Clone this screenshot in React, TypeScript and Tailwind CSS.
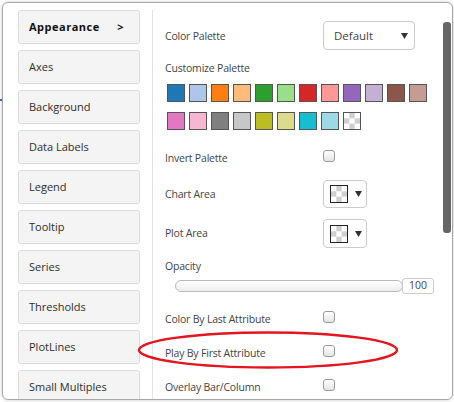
import React from 'react';

const NAV = [
  'Appearance',
  'Axes',
  'Background',
  'Data Labels',
  'Legend',
  'Tooltip',
  'Series',
  'Thresholds',
  'PlotLines',
  'Small Multiples',
];

const ROW1 = [
  '#1f77b4', '#aec7e8', '#ff7f0e', '#ffbb78', '#2ca02c', '#98df8a',
  '#d62728', '#ff9896', '#9467bd', '#c5b0d5', '#8c564b', '#c49c94',
];
const ROW2 = ['#e377c2', '#f7b6d2', '#7f7f7f', '#c7c7c7', '#bcbd22', '#dbdb8d', '#17becf', '#9edae5'];

function Checker({ size = 16 }: { size?: number }) {
  const c = size / 3;
  const cells = [];
  for (let r = 0; r < 3; r++)
    for (let k = 0; k < 3; k++)
      if ((r + k) % 2 === 1) cells.push(<rect key={`${r}-${k}`} x={k * c} y={r * c} width={c} height={c} fill="#cfcfcf" />);
  return (
    <svg width={size} height={size} className="block">
      <rect width={size} height={size} fill="#fff" />
      {cells}
    </svg>
  );
}

function Caret() {
  return (
    <svg width="7" height="6" className="block">
      <polygon points="0,0 7,0 3.5,6" fill="#333" />
    </svg>
  );
}

function Checkbox() {
  return (
    <div className="mb-[5px] h-[12px] w-[12px] rounded-[3px] border border-[#9a9a9a] bg-gradient-to-b from-white to-[#e4e4e4]" />
  );
}

function CheckRow({ label }: { label: string }) {
  return (
    <div className="flex h-[34px] items-center">
      <div className="w-[158px] pt-[1px]">{label}</div>
      <Checkbox />
    </div>
  );
}

function ColorPick({ label }: { label: string }) {
  return (
    <div className="flex h-full items-center">
      <div className="w-[158px] pt-[1px]">{label}</div>
      <div className="flex h-full w-[44px] items-center rounded-[4px] border border-[#cccccc] bg-white pl-[6px]">
        <div className="border border-[#222]">
          <Checker size={16} />
        </div>
        <div className="ml-[7px]">
          <Caret />
        </div>
      </div>
    </div>
  );
}

export default function App() {
  return (
    <div className="relative flex h-[402px] w-[454px] bg-white font-['Open_Sans',sans-serif] text-[10.5px] tracking-[-0.2px] text-[#444]">
      <div className="w-[2px]">
        <div className="mt-[99px] h-[2px] w-[2px] bg-[#2b7bb9]" />
      </div>
      <div className="mt-[2px] flex h-[398px] w-[451px] overflow-hidden rounded-[6px] border border-[#a8a8a8] shadow-[0_0_3px_rgba(0,0,0,0.25)]">
        <nav className="flex w-[149px] shrink-0 flex-col gap-[6px] pl-[15px] pt-[7px]">
          {NAV.map((n, i) => (
            <div
              key={n}
              className={`flex h-[34px] w-[122px] shrink-0 items-center justify-between rounded-[3px] border border-[#dcdcdc] bg-[#f4f4f4] pl-[10px] pr-[15px] text-[11px] ${i === 0 ? 'font-bold tracking-[0.5px] text-[#111]' : 'tracking-normal text-[#2e2e2e]'}`}
            >
              <span>{n}</span>
              {i === 0 ? <span>&gt;</span> : null}
            </div>
          ))}
        </nav>

        <div className="mt-[7px] w-[291px] shrink-0 border-l border-[#e3e3e3] pl-[12px] pt-[11px]">
          <div className="flex h-[29px] items-center">
            <div className="w-[158px] pt-[2px]">Color Palette</div>
            <div className="flex h-full w-[92px] items-center justify-between rounded-[4px] border border-[#cccccc] pl-[10px] pr-[6px] text-[11.5px] tracking-normal">
              <span>Default</span>
              <Caret />
            </div>
          </div>

          <div className="mt-[10px] h-[16px] leading-[16px]">Customize Palette</div>

          <div className="ml-[2px] mt-[8px] flex flex-col gap-[10px]">
            <div className="flex gap-[4px]">
              {ROW1.map((c) => (
                <div key={c} className="h-[18px] w-[18px] border border-[#555]" style={{ backgroundColor: c }} />
              ))}
            </div>
            <div className="flex gap-[4px]">
              {ROW2.map((c) => (
                <div key={c} className="h-[18px] w-[18px] border border-[#555]" style={{ backgroundColor: c }} />
              ))}
              <div className="h-[18px] w-[18px] border border-[#555]">
                <Checker size={16} />
              </div>
            </div>
          </div>

          <div className="mt-[11px]">
            <CheckRow label="Invert Palette" />
          </div>

          <div className="mt-[5px] h-[28px]">
            <ColorPick label="Chart Area" />
          </div>
          <div className="mt-[11px] h-[29px]">
            <ColorPick label="Plot Area" />
          </div>

          <div className="mt-[10px] h-[16px] leading-[16px]">Opacity</div>

          <div className="mt-[4px] flex h-[16px] items-center pl-[10px]">
            <div className="h-[12px] w-[228px] rounded-full border border-[#bbbbbb] bg-gradient-to-b from-white to-[#ededed]" />
            <div className="-ml-[1px] flex h-[16px] w-[32px] items-center justify-center rounded-[3px] border border-[#cccccc] bg-white text-[10.5px] tracking-normal">
              100
            </div>
          </div>

          <div className="mt-[8px]">
            <CheckRow label="Color By Last Attribute" />
            <CheckRow label="Play By First Attribute" />
            <CheckRow label="Overlay Bar/Column" />
          </div>
        </div>

        <div className="w-[9px] shrink-0 pt-[19px]">
          <div className="h-[211px] w-[8px] rounded-[3px] bg-[#666666]" />
        </div>
      </div>

      <svg className="pointer-events-none absolute left-0 top-0" width="454" height="402">
        <ellipse cx="268" cy="350" rx="129" ry="17.5" fill="none" stroke="#e3151e" strokeWidth="2.5" />
      </svg>
    </div>
  );
}
